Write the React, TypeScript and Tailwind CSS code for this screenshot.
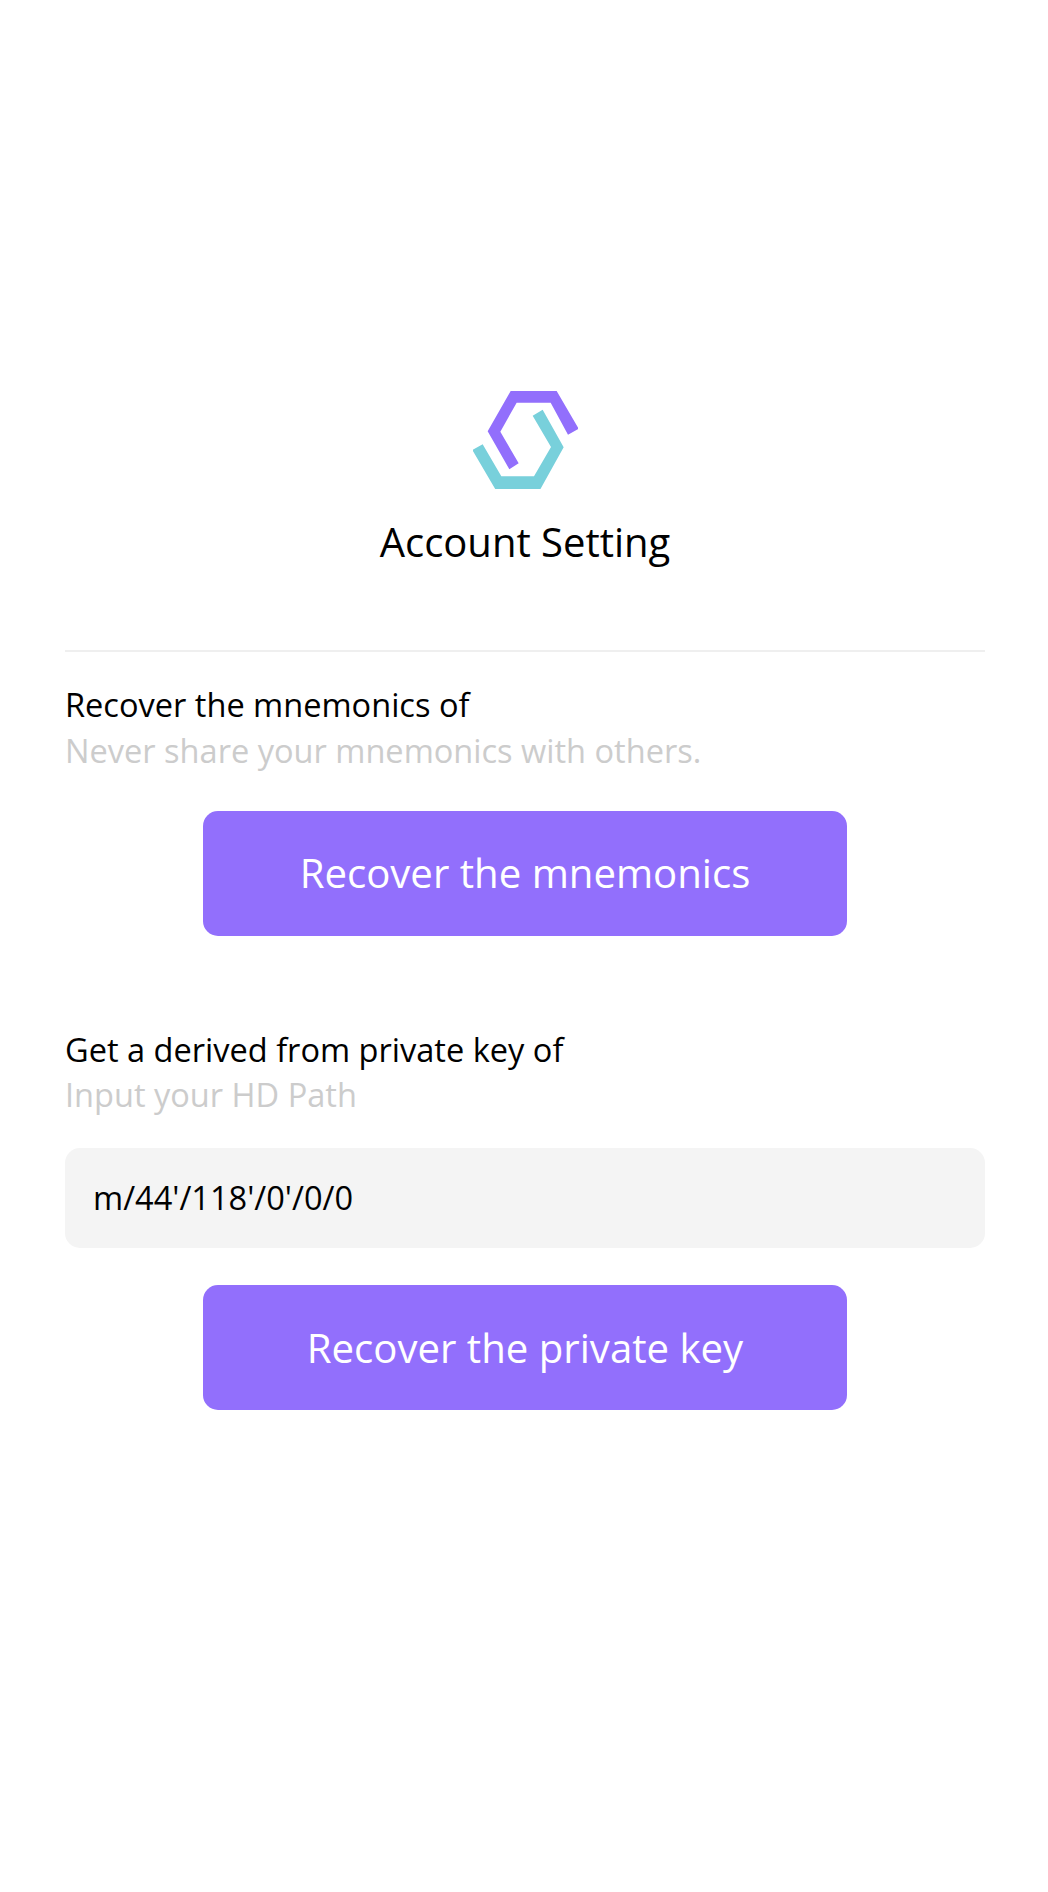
import { useState } from "react";

function Logo() {
  return (
    <svg
      className="block h-[98px] w-[105px] overflow-hidden"
      viewBox="39 33 315 294"
      aria-hidden="true"
    >
      <g className="blur-[1.8px]">
        <path
          fill="#926ffc"
          d="M147 23H296L290 33L356 146L324 164L272 68H170L121 155L176 250L148 268L83 154L152 33Z"
        />
        <path
          fill="#78d0db"
          d="M37 210L68 193L124 289H222L273 201L218 107L248 89L311 202L241 328H106Z"
        />
      </g>
    </svg>
  );
}

function ActionButton({
  label,
  className = "",
}: {
  label: string;
  className?: string;
}) {
  return (
    <button
      type="button"
      className={`flex h-[125px] w-[644px] items-center justify-center rounded-[15px] bg-[#926ffc] text-[40.15px] leading-[55px] text-white ${className}`}
    >
      {label}
    </button>
  );
}

function Caption({
  title,
  hint,
  className,
}: {
  title: string;
  hint: string;
  className: string;
}) {
  return (
    <div className={`w-full text-[32.55px] ${className}`}>
      <h2 className="text-black">{title}</h2>
      <p className="text-[#cccccc]">{hint}</p>
    </div>
  );
}

export default function App() {
  const [path, setPath] = useState("m/44'/118'/0'/0/0");

  return (
    <main className="flex min-h-[1892px] w-[1048px] flex-col bg-white pt-[391px] pr-[63px] pl-[65px] font-['Open_Sans',sans-serif]">
      <header className="flex h-[261px] flex-col items-center border-b-2 border-[#efefef]">
        <Logo />
        <h1 className="mt-[25px] text-[40px] leading-[55px] text-black">
          Account Setting
        </h1>
      </header>

      <section className="mt-[30px] flex flex-col items-center">
        <Caption
          title="Recover the mnemonics of"
          hint="Never share your mnemonics with others."
          className="leading-[46px]"
        />
        <div className="mt-[37px]">
          <ActionButton label="Recover the mnemonics" className="pb-[2px]" />
        </div>
      </section>

      <section className="mt-[91px] flex flex-col items-center">
        <Caption
          title="Get a derived from private key of"
          hint="Input your HD Path"
          className="leading-[45px]"
        />
        <input
          type="text"
          aria-label="HD Path"
          value={path}
          onChange={(event) => setPath(event.target.value)}
          className="mt-[31px] h-[100px] w-full rounded-[15px] bg-[#f4f4f4] px-[28px] pb-px text-[32.55px] leading-[45px] text-black outline-none"
        />
        <div className="mt-[37px]">
          <ActionButton label="Recover the private key" />
        </div>
      </section>
    </main>
  );
}
